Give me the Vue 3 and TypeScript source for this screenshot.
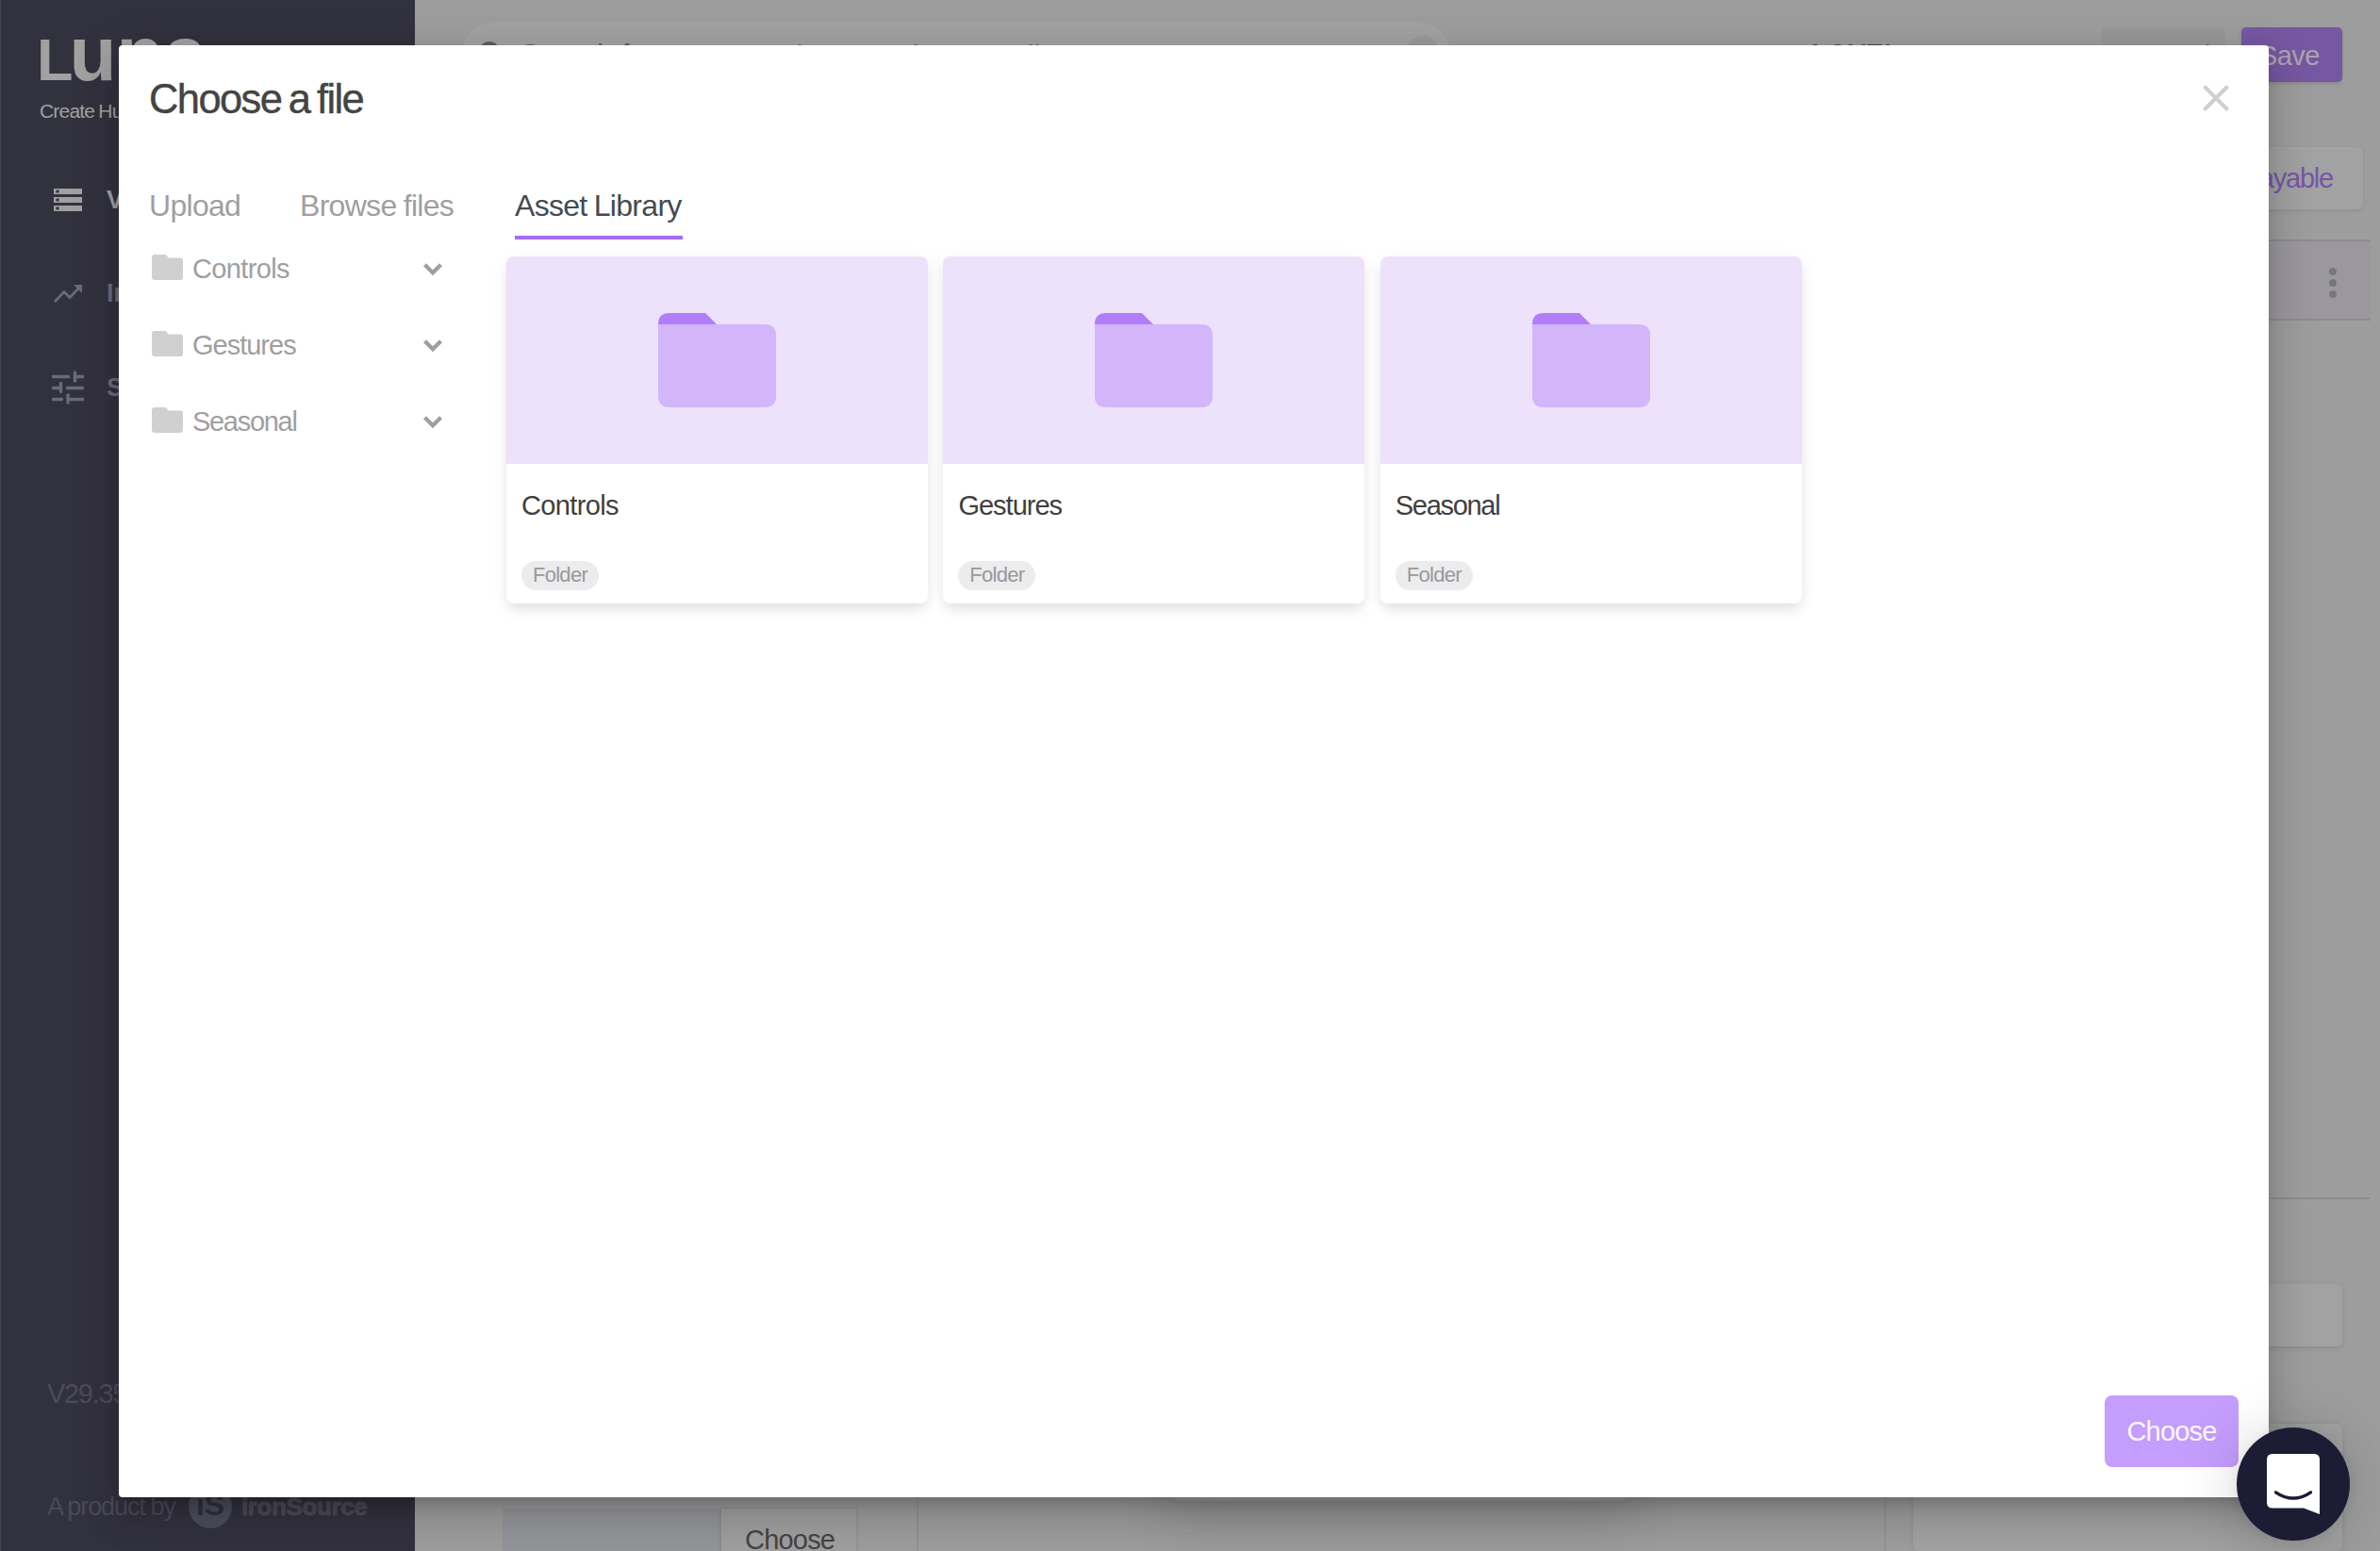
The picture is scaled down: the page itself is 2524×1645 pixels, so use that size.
<script setup lang="ts">
interface Folder {
  name: string
  spacing: string
}

const folders: Folder[] = [
  { name: 'Controls', spacing: '-0.65px' },
  { name: 'Gestures', spacing: '-1px' },
  { name: 'Seasonal', spacing: '-1.3px' },
]
</script>

<template>
  <div class="app">
    <aside class="sidebar">
      <div class="logo"><span class="logo-l">L</span><span>una</span></div>
      <div class="tagline">Create Human</div>
      <nav class="nav">
        <div class="nav-item active">
          <svg width="34" height="34" viewBox="0 0 34 34">
            <path fill="currentColor" fill-rule="evenodd" d="M2 5h30v6H2zM4.500 6.500v3h3v-3zM2 14h30v6H2zM4.500 15.500v3h3v-3zM2 23h30v6H2zM4.500 24.500v3h3v-3z" />
          </svg>
          <span>Versions</span>
        </div>
        <div class="nav-item">
          <svg width="34" height="34" viewBox="0 0 34 34">
            <path d="M3 25 13 14.500l6 6L29.500 9.500" fill="none" stroke="currentColor" stroke-width="2.800" />
            <path d="M23 7h9v9z" fill="currentColor" />
          </svg>
          <span>Insights</span>
        </div>
        <div class="nav-item">
          <svg width="34" height="36" viewBox="0 0 34 36">
            <path
              d="M1.500 6.500h16M25 6.500h7.500M24.500 2v9M1.500 18.500h8M9.500 13.500v9M16.500 18.500h16M1.500 30.500h9M17 30.500h15.500M17 26v8"
              fill="none" stroke="currentColor" stroke-width="3.400" stroke-linecap="round"
            />
          </svg>
          <span>Settings</span>
        </div>
      </nav>
      <div class="version">V29.35.0</div>
      <div class="credit">
        <span class="by">A product by</span>
        <span class="is-badge">iS</span>
        <span class="is-name">ironSource</span>
      </div>
    </aside>

    <main class="page">
      <header class="topbar">
        <div class="search">
          <svg class="lens" width="28" height="28" viewBox="0 0 28 28">
            <circle cx="11" cy="11" r="9" fill="none" stroke="currentColor" stroke-width="4" />
            <path d="m18 18 8 8" stroke="currentColor" stroke-width="4" />
          </svg>
          <span class="w1">Search for names,</span>
          <span class="w2">theme</span>
          <span class="w3">or plus</span>
          <span class="w4">small</span>
          <span class="clear"></span>
        </div>
        <span class="game">LOVE!</span>
        <span class="state">data T</span>
        <span class="btn cancel">Cancel</span>
        <span class="btn save">Save</span>
      </header>
      <div class="new-playable">Create playable</div>
      <div class="selected-row">
        <svg width="8" height="32" viewBox="0 0 8 32">
          <circle cx="4" cy="4" r="3.900" /><circle cx="4" cy="16" r="3.900" /><circle cx="4" cy="28" r="3.900" />
        </svg>
      </div>
      <div class="rule"></div>
      <div class="input-box"></div>
      <div class="lower">
        <div class="asset">
          <div class="asset-preview"></div>
          <div class="asset-choose">Choose</div>
        </div>
        <div class="stage"><div class="device"></div></div>
        <div class="panel"></div>
      </div>
    </main>

    <section class="modal">
      <div class="modal-head">
        <h1>Choose a file</h1>
        <svg class="close" width="28" height="28" viewBox="0 0 28 28">
          <path d="m1.500 1.500 25 25M26.500 1.500l-25 25" stroke="#cfcfcf" stroke-width="4" />
        </svg>
      </div>
      <div class="tabs">
        <span class="tab upload">Upload</span>
        <span class="tab browse">Browse files</span>
        <span class="tab library">Asset Library</span>
      </div>
      <div class="content">
        <ul class="tree">
          <li v-for="f in folders" :key="f.name">
            <svg class="mini-folder" width="33" height="27" viewBox="0 0 33 27">
              <path d="M3 0h10.500q1.500 0 2.500 1.200l1.500 2.300H30q3 0 3 3V24q0 3-3 3H3q-3 0-3-3V3q0-3 3-3Z" fill="#d0d0d0" />
            </svg>
            <span :style="{ letterSpacing: f.spacing }">{{ f.name }}</span>
            <svg class="chevron" width="20" height="13" viewBox="0 0 20 13">
              <path d="m1.500 1.700 8.500 8.600 8.500-8.600" fill="none" stroke="#9f9f9f" stroke-width="4.200" />
            </svg>
          </li>
        </ul>
        <div class="cards">
          <article v-for="f in folders" :key="f.name" class="card">
            <div class="thumb">
              <svg width="125" height="100" viewBox="0 0 125 100">
                <path d="M12 0h38l12.500 12.500H0V12Q0 0 12 0Z" fill="#b17efa" />
                <path d="M0 12h113q12 0 12 12v64q0 12-12 12H12Q0 100 0 88Z" fill="#d2b6f9" />
              </svg>
            </div>
            <div class="card-info">
              <div class="card-title" :style="{ letterSpacing: f.spacing }">{{ f.name }}</div>
              <span class="tag">Folder</span>
            </div>
          </article>
        </div>
      </div>
      <button class="choose">Choose</button>
    </section>

    <div class="chat">
      <svg width="56" height="64" viewBox="0 0 56 64">
        <path d="M6 0h44q6 0 6 6v58l-17-6.500H6q-6 0-6-6V6q0-6 6-6Z" fill="#fff" />
        <path d="M9.500 40.800q18.500 12.500 37 0" fill="none" stroke="#1c1d34" stroke-width="3.400" stroke-linecap="round" />
      </svg>
    </div>
  </div>
</template>

<style>
body { margin: 0; overflow: hidden; }
</style>

<style scoped>
* { box-sizing: border-box; }
.app {
  position: relative;
  display: flex;
  width: 2524px;
  height: 1645px;
  overflow: hidden;
  background: #9d9d9d;
  font-family: "Liberation Sans", Arial, sans-serif;
  font-size: 29px;
  line-height: 40px;
  white-space: nowrap;
}

/* sidebar */
.sidebar {
  display: flex;
  flex-direction: column;
  width: 440px;
  flex: none;
  background: #32313e;
  border-left: 1px solid #454452;
  overflow: hidden;
}
.logo {
  margin: 6px 0 0 38px;
  height: 100px;
  line-height: 101px;
  font-size: 82px;
  font-weight: 700;
  letter-spacing: 0;
  color: #a1a1a2;
}
.logo-l { font-size: 63px; letter-spacing: -4px; }
.tagline { margin: -1px 0 0 41px; font-size: 21px; line-height: 26px; color: #a1a1a2; letter-spacing: -0.8px; word-spacing: -1px; }
.nav { margin-top: 61px; margin-left: 54px; }
.nav-item { display: flex; align-items: center; height: 40px; margin-bottom: 59.5px; color: #6a6a7b; font-weight: 700; font-size: 27px; }
.nav-item.active { color: #a0a0a2; }
.nav-item span { margin-top: -1px; }
.nav-item svg { flex: none; margin-right: 24px; }
.version { margin-top: 967px; margin-left: 49px; color: #4c4b59; letter-spacing: -1.3px; }
.credit { display: flex; align-items: center; margin: 77px 0 0 49px; height: 46px; color: #4a4a58; }
.by { font-size: 27px; word-spacing: -0.5px; letter-spacing: -1.1px; width: 150px; }
.is-badge {
  display: block;
  width: 46px;
  height: 46px;
  border-radius: 50%;
  background: #4c4d5c;
  color: #32313e;
  text-align: center;
  font-weight: 700;
  font-size: 32px;
  line-height: 42px;
}
.is-name { margin-left: 10px; font-weight: 700; font-size: 26px; letter-spacing: -0.4px; -webkit-text-stroke: 1px #4a4a58; }

/* page behind the dialog */
.page { flex: 1; display: flex; flex-direction: column; min-width: 0; }
.topbar { display: flex; align-items: flex-start; height: 156px; padding-left: 50px; }
.search {
  display: flex;
  align-items: flex-start;
  width: 1048px;
  height: 66px;
  margin-top: 24px;
  padding: 11px 12px 0 18px;
  border-radius: 33px;
  background: #a2a2a2;
  color: #606060;
  font-size: 31px;
}
.lens { margin: 9px 14px 0 0; flex: none; }
.search .w1 { width: 288px; padding-left: 2px; margin-top: 4px; }
.search .w2 { width: 76px; margin-top: 5px; letter-spacing: -2px; }
.search .w3 { width: 117px; margin-top: 5px; }
.search .w4 { margin-top: 5px; }
.clear { width: 34px; height: 34px; margin: 3px 0 0 auto; border-radius: 50%; background: #999; }
.game { width: 136px; margin: 37px 0 0 383px; font-size: 28px; font-weight: 700; color: #444; }
.state { width: 172px; margin-top: 38px; font-size: 26px; color: #777; }
.btn { height: 58px; margin-top: 29px; border-radius: 5px; line-height: 60px; }
.cancel { width: 131px; padding-left: 30px; background: #979797; color: #555; letter-spacing: -1px; }
.save { width: 107px; margin-left: 17px; padding-left: 19px; background: #7657a1; color: #a9a5ad; letter-spacing: -0.6px; box-shadow: 0 2px 4px rgba(0, 0, 0, .12); }
.new-playable {
  align-self: flex-end;
  width: 270px;
  height: 66px;
  margin-right: 18px;
  padding-right: 32px;
  text-align: right;
  line-height: 67px;
  letter-spacing: -1.2px;
  border-radius: 6px;
  background: #a2a2a2;
  color: #7556a6;
  box-shadow: 0 2px 4px rgba(0, 0, 0, .08);
}
.selected-row {
  display: flex;
  align-items: center;
  justify-content: flex-end;
  height: 86px;
  margin: 32px 10px 0 0;
  padding: 6px 36px 0 0;
  border-top: 2px solid #8c8c8d;
  border-bottom: 2px solid #8c8c8d;
  background: #9a979e;
}
.selected-row svg { fill: #777; }
.rule { height: 2px; margin: 930px 10px 0 0; background: #8d8d8d; }
.input-box { align-self: flex-end; width: 455px; height: 66px; margin: 90px 40px 0 0; border-radius: 6px; background: #a2a2a2; box-shadow: 0 2px 6px rgba(0, 0, 0, .1); }
.lower { display: flex; height: 135px; margin-top: 82px; padding-right: 40px; }
.asset { display: flex; width: 532px; padding: 90px 0 0 93px; }
.asset-preview { width: 232px; height: 50px; background: #949599; }
.asset-choose { width: 143px; height: 60px; padding-left: 25px; line-height: 67px; letter-spacing: -0.8px; background: #9f9f9f; color: #444; box-shadow: 0 0 4px rgba(0, 0, 0, .15); }
.stage { width: 1028px; border-left: 2px solid #939393; border-right: 2px solid #939393; }
.device { width: 500px; height: 82px; margin-left: 261px; border-radius: 20px; background: #9d9d9d; box-shadow: 0 16px 60px rgba(0, 0, 0, .14); }
.panel { flex: 1; margin-left: 29px; border-radius: 6px; background: #a2a2a2; box-shadow: 0 0 5px rgba(0, 0, 0, .1); }

/* dialog */
.modal {
  position: absolute;
  left: 126px;
  top: 48px;
  display: flex;
  flex-direction: column;
  width: 2280px;
  height: 1540px;
  padding: 32px 32px 32px 32px;
  border-radius: 4px;
  background: #fff;
  box-shadow: 0 11px 15px -7px rgba(0, 0, 0, .2), 0 24px 38px 3px rgba(0, 0, 0, .1), 0 9px 46px 8px rgba(0, 0, 0, .1);
}
.modal-head { display: flex; justify-content: space-between; height: 118px; }
h1 { margin: 0; font-size: 43.5px; line-height: 50px; font-weight: 400; color: #444; letter-spacing: -1.6px; word-spacing: -3px; -webkit-text-stroke: 0.4px #444; }
.close { margin: 10px 10px 0 0; }
.tabs { display: flex; gap: 64px; height: 56px; font-size: 32px; line-height: 41px; color: #9f9f9f; letter-spacing: -0.7px; word-spacing: -1px; }
.tab { height: 56px; }
.upload { width: 98px; }
.browse { width: 163px; margin: 0 2px 0 -2px; }
.library { width: 178px; margin-left: -1px; border-bottom: 4px solid #a46cf9; color: #444b51; }
.content { display: flex; align-items: flex-start; }
.tree { width: 379px; margin: 11px 0 0; padding: 0 68px 0 3px; list-style: none; color: #9f9f9f; }
.tree li { display: flex; align-items: center; height: 40px; margin-bottom: 41px; }
.mini-folder { margin: -3px 10px 0 0; }
.chevron { margin: 1px 0 0 auto; }
.cards { display: flex; gap: 16.4px; margin-top: 18px; }
.card { width: 447px; height: 368px; border-radius: 8px; background: #fff; box-shadow: 0 8px 12px -2px rgba(0, 0, 0, .08), 0 4px 20px rgba(0, 20, 10, .06); }
.thumb { display: flex; align-items: center; justify-content: center; height: 220px; border-radius: 8px 8px 0 0; background: #eee1fb; }
.card-info { padding: 24px 16px 0; }
.card-title { margin-bottom: 39px; color: #404040; }
.tag { display: block; width: 82px; height: 31px; border-radius: 16px; background: #ececee; color: #999; font-size: 22px; line-height: 30px; text-align: center; letter-spacing: -0.7px; }
.choose {
  align-self: flex-end;
  width: 142px;
  height: 76px;
  margin-top: auto;
  padding: 0;
  border: 0;
  border-radius: 8px;
  background: #c59dfd;
  color: #faf8fc;
  font: 29px/77px "Liberation Sans", Arial, sans-serif;
  letter-spacing: -0.8px;
}

.chat {
  position: absolute;
  left: 2372px;
  top: 1514px;
  display: flex;
  justify-content: center;
  width: 120px;
  height: 120px;
  padding-top: 28px;
  border-radius: 50%;
  background: #1c1d34;
  box-shadow: 0 2px 12px rgba(0, 0, 0, .08), 0 4px 64px rgba(0, 0, 0, .18);
}
</style>
